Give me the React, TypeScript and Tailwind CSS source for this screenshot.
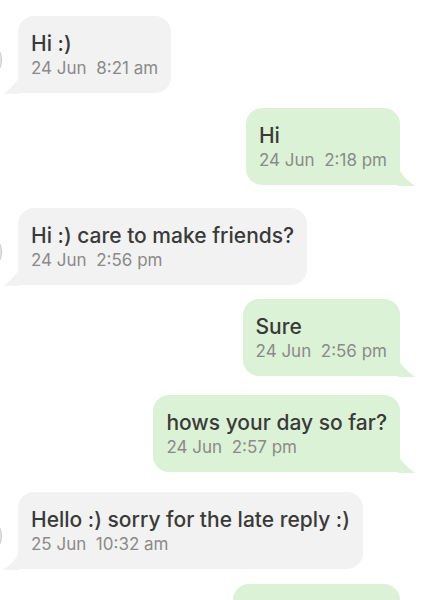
import React from 'react';

type Msg = {
  text: string;
  time: string;
  mine: boolean;
  gap: string;
};

const messages: Msg[] = [
  { text: 'Hi :)', time: '24 Jun  8:21 am', mine: false, gap: 'mt-[16px]' },
  { text: 'Hi', time: '24 Jun  2:18 pm', mine: true, gap: 'mt-[15px]' },
  { text: 'Hi :) care to make friends?', time: '24 Jun  2:56 pm', mine: false, gap: 'mt-[23px]' },
  { text: 'Sure', time: '24 Jun  2:56 pm', mine: true, gap: 'mt-[14px]' },
  { text: 'hows your day so far?', time: '24 Jun  2:57 pm', mine: true, gap: 'mt-[19px]' },
  { text: 'Hello :) sorry for the late reply :)', time: '25 Jun  10:32 am', mine: false, gap: 'mt-[20px]' },
];

function Tail({ mine }: { mine: boolean }) {
  // little speech tail in the bottom corner
  return mine ? (
    <svg className="absolute -right-[15px] bottom-[-1px]" width="17" height="19" viewBox="0 0 17 19">
      <path d="M0 0 Q4 10 17 19 L0 19 Z" fill="#dcf2d6" />
    </svg>
  ) : (
    <svg className="absolute -left-[15px] bottom-[-1px]" width="17" height="19" viewBox="0 0 17 19">
      <path d="M17 0 Q13 10 0 19 L17 19 Z" fill="#f2f2f2" />
    </svg>
  );
}

function Bubble({ msg }: { msg: Msg }) {
  return (
    <div className={`flex ${msg.mine ? 'justify-end pr-[31px]' : 'justify-start pl-[18px]'} ${msg.gap}`}>
      {!msg.mine && (
        <div className="relative w-0">
          <div className="absolute left-[-56px] top-[24px] w-[40px] h-[40px] rounded-full bg-[#e4e4e8] border border-[#c9c9cf]" />
        </div>
      )}
      <div
        className={`relative rounded-[16px] px-[13px] pt-[15px] pb-[14px] ${
          msg.mine ? 'bg-[#dcf2d6] rounded-br-none' : 'bg-[#f2f2f2] rounded-bl-none'
        }`}
      >
        <div className="text-[21px] leading-[26px] font-medium text-[#3a3a3a] whitespace-nowrap">{msg.text}</div>
        <div className="text-[17px] leading-[22px] text-[#8a8a8a] whitespace-pre">{msg.time}</div>
        <Tail mine={msg.mine} />
      </div>
    </div>
  );
}

export default function App() {
  return (
    <div className="w-[431px] h-[600px] overflow-hidden bg-white font-['Inter','Liberation_Sans',sans-serif]">
      {messages.map((m, i) => (
        <Bubble key={i} msg={m} />
      ))}
      {/* next outgoing bubble, only its top edge is on screen */}
      <div className="flex justify-end pr-[31px] mt-[15px]">
        <div className="w-[167px] h-[77px] rounded-[16px] bg-[#dcf2d6]" />
      </div>
    </div>
  );
}
